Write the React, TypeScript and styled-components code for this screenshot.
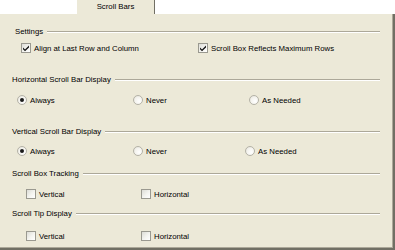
import React from 'react';
import styled, { createGlobalStyle } from 'styled-components';

const Global = createGlobalStyle`
  html, body { margin: 0; padding: 0; background: #ffffff; }
  body {
    font-family: "Liberation Sans", Arial, sans-serif;
    font-size: 7.8px;
    color: #000000;
  }
`;

const Frame = styled.div`
  width: 395px;
  height: 250px;
  display: flex;
  flex-direction: column;
  background: #ffffff;
  overflow: hidden;
`;

const TabStrip = styled.div`
  height: 14px;
  flex-shrink: 0;
  display: flex;
  padding-left: 77px;
`;

const Tab = styled.div`
  width: 78px;
  background: #ece9d8;
  border-right: 1px solid #716f64;
  display: flex;
  align-items: center;
  justify-content: center;
  padding-bottom: 1px;
  box-sizing: border-box;
`;

const Panel = styled.div`
  flex: 1;
  box-sizing: border-box;
  background: #ece9d8;
  border-right: 2px solid #716f64;
  border-bottom: 2px solid #716f64;
  box-shadow: inset -1px -1px 0 #aca899;
  padding: 10px 13px 0 0;
  display: flex;
  flex-direction: column;
`;

const Header = styled.div<{ $top: number; $left: number }>`
  height: 14px;
  margin-top: ${p => p.$top}px;
  padding-left: ${p => p.$left}px;
  display: flex;
  align-items: center;
  gap: 4px;
`;

const Rule = styled.div`
  flex: 1;
  height: 0;
  border-top: 1px solid #aca899;
  border-bottom: 1px solid #ffffff;
  margin-top: 1px;
`;

const Row = styled.div<{ $top: number; $left: number; $cols: string }>`
  height: 14px;
  margin-top: ${p => p.$top}px;
  padding-left: ${p => p.$left}px;
  display: grid;
  grid-template-columns: ${p => p.$cols};
  align-items: center;
`;

const Option = styled.label`
  display: flex;
  align-items: center;
  gap: 3px;
  white-space: nowrap;
`;

const Box = styled.span`
  width: 10px;
  height: 10px;
  box-sizing: border-box;
  border: 1px solid #9a9990;
  background: linear-gradient(135deg, #dcdcd6 0%, #f4f4f0 55%, #ffffff 100%);
  display: flex;
  align-items: center;
  justify-content: center;
`;

const Round = styled.span`
  width: 10px;
  height: 10px;
  box-sizing: border-box;
  border-radius: 50%;
  border: 1px solid #b4b2a7;
  background: radial-gradient(circle at 65% 65%, #ffffff 0%, #f4f3ee 55%, #dddcd3 100%);
  display: flex;
  align-items: center;
  justify-content: center;
`;

const Dot = styled.span`
  width: 4px;
  height: 4px;
  border-radius: 50%;
  background: #1a1a1a;
`;

const Check: React.FC<{ checked?: boolean; label: string }> = ({ checked, label }) => (
  <Option>
    <Box>
      {checked && (
        <svg width="8" height="8" viewBox="0 0 8 8">
          <path d="M1 3.6 L3 5.6 L7 1.6 L7 3.4 L3 7.2 L1 5.2 Z" fill="#111" />
        </svg>
      )}
    </Box>
    {label}
  </Option>
);

const Radio: React.FC<{ checked?: boolean; label: string }> = ({ checked, label }) => (
  <Option>
    <Round>{checked && <Dot />}</Round>
    {label}
  </Option>
);

export default function App() {
  return (
    <>
      <Global />
      <Frame>
        <TabStrip>
          <Tab>Scroll Bars</Tab>
        </TabStrip>
        <Panel>
          <Header $top={0} $left={15}>Settings<Rule /></Header>
          <Row $top={3} $left={21} $cols="177px auto">
            <Check checked label="Align at Last Row and Column" />
            <Check checked label="Scroll Box Reflects Maximum Rows" />
          </Row>

          <Header $top={17} $left={12}>Horizontal Scroll Bar Display<Rule /></Header>
          <Row $top={7} $left={17} $cols="116px 116px auto">
            <Radio checked label="Always" />
            <Radio label="Never" />
            <Radio label="As Needed" />
          </Row>

          <Header $top={17} $left={12}>Vertical Scroll Bar Display<Rule /></Header>
          <Row $top={6} $left={17} $cols="116px 112px auto">
            <Radio checked label="Always" />
            <Radio label="Never" />
            <Radio label="As Needed" />
          </Row>

          <Header $top={8} $left={12}>Scroll Box Tracking<Rule /></Header>
          <Row $top={7} $left={26} $cols="115px auto">
            <Check label="Vertical" />
            <Check label="Horizontal" />
          </Row>

          <Header $top={5} $left={12}>Scroll Tip Display<Rule /></Header>
          <Row $top={9} $left={26} $cols="115px auto">
            <Check label="Vertical" />
            <Check label="Horizontal" />
          </Row>
        </Panel>
      </Frame>
    </>
  );
}
